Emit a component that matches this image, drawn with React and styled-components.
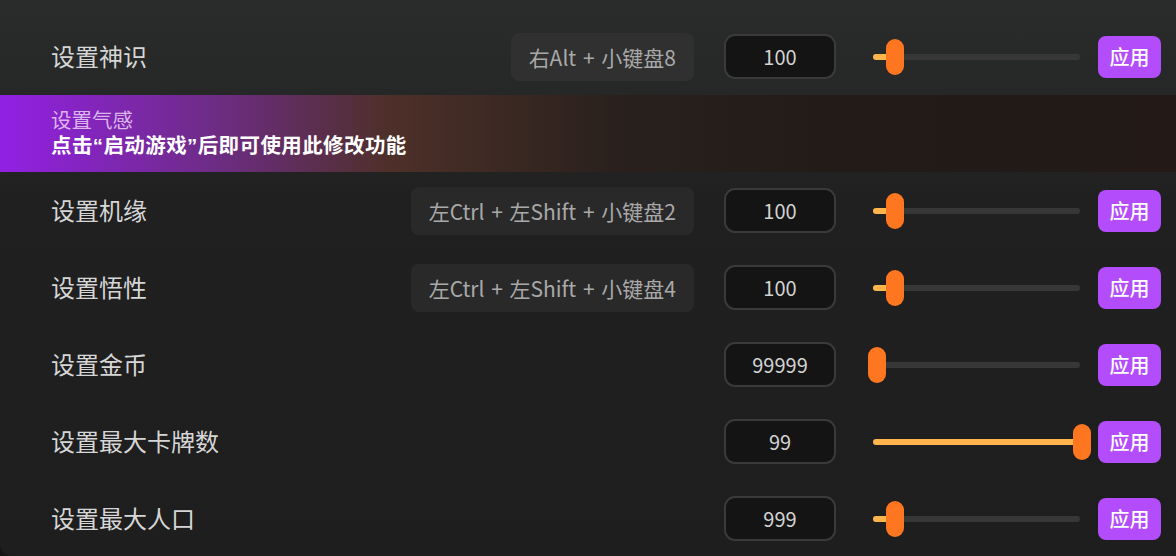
import React from 'react';
import styled, { createGlobalStyle } from 'styled-components';

const GlobalStyle = createGlobalStyle`
  html, body {
    margin: 0;
    padding: 0;
    background: #141414;
    font-family: "Noto Sans CJK SC", "Noto Sans", sans-serif;
  }
`;

const rows = [
  { label: '设置神识', keys: '右Alt + 小键盘8', value: '100', pct: 0.088 },
  { banner: true, label: '设置气感', note: '点击“启动游戏”后即可使用此修改功能' },
  { label: '设置机缘', keys: '左Ctrl + 左Shift + 小键盘2', value: '100', pct: 0.088 },
  { label: '设置悟性', keys: '左Ctrl + 左Shift + 小键盘4', value: '100', pct: 0.088 },
  { label: '设置金币', value: '99999', pct: 0 },
  { label: '设置最大卡牌数', value: '99', pct: 1 },
  { label: '设置最大人口', value: '999', pct: 0.088 },
];

const Panel = styled.div`
  width: 1176px;
  height: 556px;
  overflow: hidden;
  padding-top: 18px;
  box-sizing: border-box;
  border-bottom-left-radius: 12px;
  background: linear-gradient(180deg, #2a2c2b 0, #262827 90px, #202020 200px, #1e1e1e 100%);
`;

const Row = styled.div`
  height: 77px;
  display: flex;
  align-items: center;
  padding: 0 15px 0 51px;
`;

const Label = styled.div`
  flex: 1;
  font-size: 24px;
  line-height: 32px;
  margin-top: -2px;
  color: #d6d6d6;
`;

const Keys = styled.div`
  height: 48px;
  display: flex;
  align-items: center;
  padding: 0 18px;
  border-radius: 8px;
  background: ${p => (p.top ? '#2f302f' : '#292929')};
  color: #a9a9a9;
  font-size: 21px;
  word-spacing: 2px;
  margin-right: 30px;
  white-space: nowrap;
`;

const Input = styled.div`
  width: 112px;
  height: 45px;
  box-sizing: border-box;
  border: 2px solid #3a3a3a;
  border-radius: 11px;
  background: #141414;
  color: #d2d2d2;
  font-size: 20px;
  display: flex;
  align-items: center;
  justify-content: center;
  margin-right: 37px;
`;

const Slider = styled.div`
  position: relative;
  width: 207px;
  height: 36px;
  margin-right: 18px;
`;

const Track = styled.div`
  position: absolute;
  left: 0;
  right: 0;
  top: 15px;
  height: 6px;
  border-radius: 3px;
  background: #373737;
`;

const Fill = styled.div`
  position: absolute;
  left: 0;
  top: 0;
  bottom: 0;
  border-radius: 3px;
  background: #ffb54c;
`;

const Thumb = styled.div`
  position: absolute;
  top: 0;
  width: 18px;
  height: 36px;
  margin-left: -7px;
  border-radius: 9px;
  background: #ff7620;
`;

const Apply = styled.button`
  width: 63px;
  height: 42px;
  border: none;
  border-radius: 8px;
  background: #b34cfb;
  color: #ffffff;
  font-family: inherit;
  font-size: 20px;
  font-weight: 500;
  padding: 0;
  cursor: pointer;
`;

const Banner = styled.div`
  height: 77px;
  box-sizing: border-box;
  padding: 11px 51px 0;
  background: linear-gradient(90deg, #9220e4 0%, #6e2c86 18%, #4e3029 33%, #2a211d 52%, #221b18 70%, #231a18 100%);
`;

const BannerLabel = styled.div`
  font-size: 20.5px;
  line-height: 26px;
  color: rgba(240, 215, 250, 0.82);
`;

const BannerNote = styled.div`
  font-family: "Liberation Sans", "Noto Sans CJK SC", sans-serif;
  font-size: 20.5px;
  letter-spacing: 0.4px;
  line-height: 28px;
  font-weight: 700;
  color: #ffffff;
`;

function SettingSlider({ pct }) {
  const x = pct * 205 + 2;
  return (
    <Slider>
      <Track>
        <Fill style={{ width: `${Math.max(x, 0)}px` }} />
      </Track>
      <Thumb style={{ left: `${x}px` }} />
    </Slider>
  );
}

export default function App() {
  return (
    <>
      <GlobalStyle />
      <Panel>
        {rows.map((r, i) =>
          r.banner ? (
            <Banner key={i}>
              <BannerLabel>{r.label}</BannerLabel>
              <BannerNote>{r.note}</BannerNote>
            </Banner>
          ) : (
            <Row key={i}>
              <Label>{r.label}</Label>
              {r.keys && <Keys top={i === 0}>{r.keys}</Keys>}
              <Input>{r.value}</Input>
              <SettingSlider pct={r.pct} />
              <Apply>应用</Apply>
            </Row>
          )
        )}
      </Panel>
    </>
  );
}
